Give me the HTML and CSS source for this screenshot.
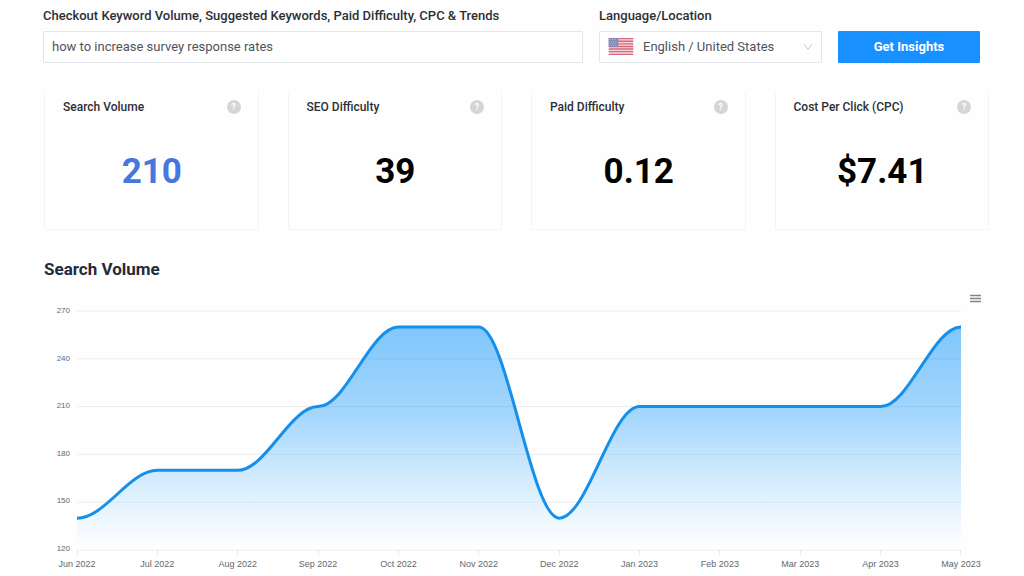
FILE: index.html
```html
<!DOCTYPE html>
<html lang="en">
<head>
<meta charset="utf-8">
<meta name="viewport" content="width=device-width, initial-scale=1">
<title>Keyword Insights</title>
<link rel="stylesheet" href="styles.css">
</head>
<body>
<main class="page">
  <form class="search">
    <div class="field field-keyword">
      <label class="field-label" for="keyword">Checkout Keyword Volume, Suggested Keywords, Paid Difficulty, CPC &amp; Trends</label>
      <input class="control" id="keyword" type="text" value="how to increase survey response rates">
    </div>
    <div class="field field-locale">
      <label class="field-label" for="locale">Language/Location</label>
      <div class="control locale">
        <svg class="flag" viewBox="0 0 26 18" aria-hidden="true">
          <path fill="#f3dde2" d="M0 0h26v18H0z"/>
          <path stroke="#d9677a" stroke-width="1.5" d="M0 .7h26M0 3.45h26M0 6.2h26M0 8.95h26M0 11.7h26M0 14.45h26M0 17.3h26"/>
          <path fill="#8088b4" d="M0 0h10v9.6H0z"/>
          <path stroke="#c5c9e0" stroke-width="1" stroke-dasharray="1 1.6" d="M1 1.6h8M2 3.7h7M1 5.8h8M2 7.9h7"/>
        </svg>
        <select class="locale-select" id="locale"><option>English / United States</option></select>
        <svg class="chevron" viewBox="0 0 10 8" aria-hidden="true"><path fill="none" stroke="#c4c4c4" d="M1.2 1.2 5 6.4l3.800-5.200"/></svg>
      </div>
    </div>
    <button class="submit" type="submit">Get Insights</button>
  </form>

  <section class="cards">
    <article class="card">
      <header class="card-head"><h2 class="card-title">Search Volume</h2><button class="help" type="button" aria-label="About search volume">?</button></header>
      <p class="card-value card-value-accent">210</p>
    </article>
    <article class="card">
      <header class="card-head"><h2 class="card-title">SEO Difficulty</h2><button class="help" type="button" aria-label="About SEO difficulty">?</button></header>
      <p class="card-value">39</p>
    </article>
    <article class="card">
      <header class="card-head"><h2 class="card-title">Paid Difficulty</h2><button class="help" type="button" aria-label="About paid difficulty">?</button></header>
      <p class="card-value">0.12</p>
    </article>
    <article class="card">
      <header class="card-head"><h2 class="card-title">Cost Per Click (CPC)</h2><button class="help" type="button" aria-label="About cost per click">?</button></header>
      <p class="card-value">$7.41</p>
    </article>
  </section>

  <section class="trend">
    <h2 class="trend-title">Search Volume</h2>
    <div class="toolbar">
      <button class="menu" type="button" aria-label="Chart menu">
        <svg class="menu-icon" viewBox="0 0 12 9" aria-hidden="true"><path stroke="#7b8790" stroke-width="1.4" d="M0 1.500h11M0 4.500h11M0 7.500h11"/></svg>
      </button>
    </div>
    <div class="chart">
      <div class="y-axis"><span>270</span><span>240</span><span>210</span><span>180</span><span>150</span><span>120</span></div>
      <svg class="plot" viewBox="0 0 1100 150" preserveAspectRatio="none" role="img" aria-label="Monthly search volume, June 2022 to May 2023">
        <defs>
          <linearGradient id="fill" x1="0" y1="0" x2="0" y2="1">
            <stop offset="0" stop-color="#008ffb" stop-opacity=".5"/>
            <stop offset=".4" stop-color="#1496fb" stop-opacity=".38"/>
            <stop offset="1" stop-color="#fff" stop-opacity=".3"/>
          </linearGradient>
        </defs>
        <path class="grid-line" d="M0 0H1100M0 30H1100M0 60H1100M0 90H1100M0 120H1100M0 150H1100"/>
        <path fill="url(#fill)" d="M0 130C35 130 65 100 100 100H200C235 100 265 60 300 60C335 60 365 10 400 10H500C535 10 565 130 600 130C635 130 665 60 700 60H1000C1035 60 1065 10 1100 10V150H0Z"/>
        <path class="series" d="M0 130C35 130 65 100 100 100H200C235 100 265 60 300 60C335 60 365 10 400 10H500C535 10 565 130 600 130C635 130 665 60 700 60H1000C1035 60 1065 10 1100 10"/>
      </svg>
      <div class="x-axis"><span>Jun 2022</span><span>Jul 2022</span><span>Aug 2022</span><span>Sep 2022</span><span>Oct 2022</span><span>Nov 2022</span><span>Dec 2022</span><span>Jan 2023</span><span>Feb 2023</span><span>Mar 2023</span><span>Apr 2023</span><span>May 2023</span></div>
    </div>
  </section>
</main>
</body>
</html>
```

FILE: styles.css
```css
* { box-sizing: border-box; }

body {
  margin: 0;
  background: #fefefe;
  color: #2b2f36;
  font-family: Roboto, "Liberation Sans", sans-serif;
}

h2, p { margin: 0; }

.page { padding: 8px 35px 0 44px; }

.search {
  display: grid;
  grid-template-columns: 540fr 223fr 142fr;
  gap: 16px;
  align-items: end;
  margin: 0 9px 0 -1px;
}

.field { display: flex; flex-direction: column; gap: 8px; }

.field-label {
  font-size: 13px;
  font-weight: 500;
  line-height: 15px;
  white-space: nowrap;
}

.control {
  width: 100%;
  height: 32px;
  padding: 0 8px 1px;
  border: 1px solid #e3e6ea;
  border-radius: 1px;
  background: #fff;
  color: #50545a;
  font: 13px/29px Roboto, "Liberation Sans", sans-serif;
}

.locale { display: flex; align-items: center; gap: 9px; }
.flag { width: 26px; height: 17px; flex: none; }
.chevron { width: 10px; height: 8px; flex: none; }

.locale-select {
  flex: 1;
  min-width: 0;
  height: 29px;
  padding: 0;
  border: 0;
  background: none;
  color: inherit;
  font: inherit;
  appearance: none;
}

.submit {
  height: 32px;
  padding: 0 0 1px;
  border: 0;
  border-radius: 1px;
  background: #1890ff;
  color: #fff;
  font: 700 13px/31px Roboto, "Liberation Sans", sans-serif;
}

.cards {
  display: grid;
  grid-template-columns: repeat(4, 1fr);
  gap: 29px;
  margin-top: 29px;
}

.card {
  height: 138px;
  padding: 7px 17px 0 18px;
  border: 1px solid #f3f4f5;
  border-top: 0;
  border-radius: 0 0 2px 2px;
}

.card-head { display: flex; align-items: center; justify-content: space-between; }
.card-title { font-size: 12px; font-weight: 500; line-height: 16px; }

.help {
  width: 14px;
  height: 14px;
  padding: 0;
  border: 0;
  border-radius: 50%;
  background: #d4d5d6;
  color: #fff;
  font: 700 9px/14px Roboto, "Liberation Sans", sans-serif;
}

.card-value {
  margin-top: 37px;
  color: #000;
  font-size: 35px;
  font-weight: 700;
  line-height: 40px;
  text-align: center;
}

.card-value-accent { color: #4676df; }

.trend { margin-top: 27px; }
.trend-title { font-size: 17px; font-weight: 700; line-height: 24px; color: #252a3a; }

.toolbar { display: flex; justify-content: flex-end; margin: 13px 7px 8px 0; }
.menu { display: flex; padding: 0; border: 0; background: none; }
.menu-icon { width: 12px; height: 9px; }

.chart {
  display: grid;
  grid-template-columns: 26px 1fr;
  column-gap: 7px;
  margin-right: 28px;
  color: #64686c;
  font-family: "Liberation Sans", sans-serif;
}

.y-axis {
  display: flex;
  flex-direction: column;
  justify-content: space-between;
  padding-bottom: 1px;
  font-size: 8px;
  text-align: right;
}

.y-axis span { height: 0; line-height: 0; }

.plot { display: block; width: 100%; height: 239px; overflow: visible; }

.grid-line { fill: none; stroke: #ebecee; vector-effect: non-scaling-stroke; }
.series { fill: none; stroke: #1490ea; stroke-width: 3px; vector-effect: non-scaling-stroke; }

.x-axis {
  grid-column: 2;
  display: flex;
  justify-content: space-between;
  font-size: 9px;
  line-height: 12px;
}

.x-axis span {
  display: flex;
  flex-direction: column;
  align-items: center;
  width: 0;
  white-space: nowrap;
}

.x-axis span::before {
  content: "";
  width: 1px;
  height: 5px;
  margin-bottom: 3px;
  background: #e4e6e8;
}
```
